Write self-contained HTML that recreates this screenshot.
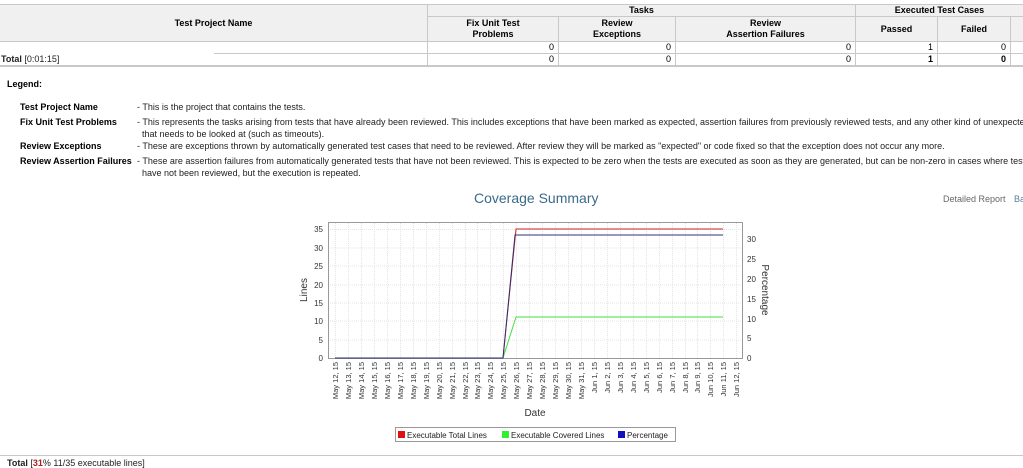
<!DOCTYPE html>
<html><head><meta charset="utf-8"><style>
body{margin:0;width:1023px;height:467px;overflow:hidden;background:#fff;font-family:"Liberation Sans",Arial,sans-serif;font-size:9px;color:#000;position:relative}
.a{position:absolute;white-space:nowrap}
.b{font-weight:bold}
.hd{position:absolute;background:#f0f0f0;font-weight:bold;text-align:center;font-size:9px;display:flex;align-items:center;justify-content:center;line-height:11px}
.ln{position:absolute;background:#c8c8c8}
.n{position:absolute;text-align:right;font-size:9px}
</style></head><body>
<div class="hd" style="left:0;top:5px;width:427px;height:36px">Test Project Name</div>
<div class="hd" style="left:428px;top:5px;width:427px;height:11px">Tasks</div>
<div class="hd" style="left:856px;top:5px;width:167px;height:11px">Executed Test Cases</div>
<div class="hd" style="left:428px;top:17px;width:130px;height:24px">Fix Unit Test<br>Problems</div>
<div class="hd" style="left:559px;top:17px;width:116px;height:24px">Review<br>Exceptions</div>
<div class="hd" style="left:676px;top:17px;width:179px;height:24px">Review<br>Assertion Failures</div>
<div class="hd" style="left:856px;top:17px;width:81px;height:24px">Passed</div>
<div class="hd" style="left:938px;top:17px;width:72px;height:24px">Failed</div>
<div class="hd" style="left:1011px;top:17px;width:12px;height:24px"></div>
<div class="ln" style="left:0;top:4px;width:1023px;height:1px"></div>
<div class="ln" style="left:428px;top:16px;width:595px;height:1px"></div>
<div class="ln" style="left:0;top:41px;width:1023px;height:1px"></div>
<div class="ln" style="left:214px;top:53px;width:809px;height:1px"></div>
<div class="ln" style="left:0;top:65px;width:1023px;height:2px"></div>
<div class="ln" style="left:427px;top:4px;width:1px;height:62px"></div>
<div class="ln" style="left:558px;top:16px;width:1px;height:50px"></div>
<div class="ln" style="left:675px;top:16px;width:1px;height:50px"></div>
<div class="ln" style="left:855px;top:4px;width:1px;height:62px"></div>
<div class="ln" style="left:937px;top:16px;width:1px;height:50px"></div>
<div class="ln" style="left:1010px;top:16px;width:1px;height:50px"></div>
<div class="a" style="left:1px;top:54px;color:#222"><b>Total</b> [0:01:15]</div>
<div class="n" style="left:500px;width:54px;top:42px">0</div>
<div class="n" style="left:600px;width:71px;top:42px">0</div>
<div class="n" style="left:780px;width:71px;top:42px">0</div>
<div class="n" style="left:860px;width:73px;top:42px">1</div>
<div class="n" style="left:940px;width:66px;top:42px">0</div>
<div class="n" style="left:500px;width:54px;top:54px">0</div>
<div class="n" style="left:600px;width:71px;top:54px">0</div>
<div class="n" style="left:780px;width:71px;top:54px">0</div>
<div class="n b" style="left:860px;width:73px;top:54px">1</div>
<div class="n b" style="left:940px;width:66px;top:54px">0</div>
<div class="a b" style="left:7px;top:79px">Legend:</div>
<div class="a b" style="left:20px;top:102px">Test Project Name</div>
<div class="a b" style="left:20px;top:117px">Fix Unit Test Problems</div>
<div class="a b" style="left:20px;top:141px">Review Exceptions</div>
<div class="a b" style="left:20px;top:156px">Review Assertion Failures</div>
<div class="a" style="left:137px;top:102px;color:#222">- This is the project that contains the tests.</div>
<div class="a" style="left:137px;top:117px;color:#222">- This represents the tasks arising from tests that have already been reviewed. This includes exceptions that have been marked as expected, assertion failures from previously reviewed tests, and any other kind of unexpected</div>
<div class="a" style="left:142px;top:129px;color:#222">that needs to be looked at (such as timeouts).</div>
<div class="a" style="left:137px;top:141px;color:#222">- These are exceptions thrown by automatically generated test cases that need to be reviewed. After review they will be marked as "expected" or code fixed so that the exception does not occur any more.</div>
<div class="a" style="left:137px;top:156px;color:#222">- These are assertion failures from automatically generated tests that have not been reviewed. This is expected to be zero when the tests are executed as soon as they are generated, but can be non-zero in cases where tests</div>
<div class="a" style="left:142px;top:168px;color:#222">have not been reviewed, but the execution is repeated.</div>
<div class="a" style="left:474px;top:190px;font-size:14px;color:#3a6a8a">Coverage Summary</div>
<div class="a" style="left:943px;top:194px;color:#666">Detailed Report <span style="color:#5a7fa0;margin-left:6px">Ba</span></div>
<svg class="a" style="left:0;top:0" width="1023" height="467" font-family="Liberation Sans, sans-serif">
<g stroke="#e4e4e4" stroke-dasharray="1,1" stroke-width="1">
<line x1="328" y1="229.5" x2="742" y2="229.5"/><line x1="328" y1="248" x2="742" y2="248"/><line x1="328" y1="266" x2="742" y2="266"/><line x1="328" y1="285" x2="742" y2="285"/><line x1="328" y1="303" x2="742" y2="303"/><line x1="328" y1="321" x2="742" y2="321"/><line x1="328" y1="340" x2="742" y2="340"/>
<line x1="335.5" y1="223" x2="335.5" y2="358"/><line x1="348.5" y1="223" x2="348.5" y2="358"/><line x1="361.5" y1="223" x2="361.5" y2="358"/><line x1="374.5" y1="223" x2="374.5" y2="358"/><line x1="387.5" y1="223" x2="387.5" y2="358"/><line x1="400.5" y1="223" x2="400.5" y2="358"/><line x1="413.5" y1="223" x2="413.5" y2="358"/><line x1="426.5" y1="223" x2="426.5" y2="358"/><line x1="439.5" y1="223" x2="439.5" y2="358"/><line x1="452.5" y1="223" x2="452.5" y2="358"/><line x1="465.5" y1="223" x2="465.5" y2="358"/><line x1="477.5" y1="223" x2="477.5" y2="358"/><line x1="490.5" y1="223" x2="490.5" y2="358"/><line x1="503.5" y1="223" x2="503.5" y2="358"/><line x1="516.5" y1="223" x2="516.5" y2="358"/><line x1="529.5" y1="223" x2="529.5" y2="358"/><line x1="542.5" y1="223" x2="542.5" y2="358"/><line x1="555.5" y1="223" x2="555.5" y2="358"/><line x1="568.5" y1="223" x2="568.5" y2="358"/><line x1="581.5" y1="223" x2="581.5" y2="358"/><line x1="594.5" y1="223" x2="594.5" y2="358"/><line x1="607.5" y1="223" x2="607.5" y2="358"/><line x1="620.5" y1="223" x2="620.5" y2="358"/><line x1="633.5" y1="223" x2="633.5" y2="358"/><line x1="646.5" y1="223" x2="646.5" y2="358"/><line x1="659.5" y1="223" x2="659.5" y2="358"/><line x1="672.5" y1="223" x2="672.5" y2="358"/><line x1="685.5" y1="223" x2="685.5" y2="358"/><line x1="697.5" y1="223" x2="697.5" y2="358"/><line x1="710.5" y1="223" x2="710.5" y2="358"/><line x1="723.5" y1="223" x2="723.5" y2="358"/><line x1="736.5" y1="223" x2="736.5" y2="358"/>
</g>
<rect x="328.5" y="222.5" width="414" height="136" fill="none" stroke="#999"/>
<g font-size="8" fill="#333" text-anchor="end">
<text x="323" y="232">35</text><text x="323" y="251">30</text><text x="323" y="269">25</text><text x="323" y="288">20</text><text x="323" y="306">15</text><text x="323" y="324">10</text><text x="323" y="343">5</text><text x="323" y="361">0</text>
</g>
<g font-size="8" fill="#333">
<text x="747" y="242">30</text><text x="747" y="262">25</text><text x="747" y="282">20</text><text x="747" y="302">15</text><text x="747" y="322">10</text><text x="747" y="341">5</text><text x="747" y="361">0</text>
</g>
<text transform="translate(307,290) rotate(-90)" font-size="10" fill="#333" text-anchor="middle">Lines</text>
<text transform="translate(762,290) rotate(90)" font-size="10" fill="#333" text-anchor="middle">Percentage</text>
<g font-size="7.5" fill="#333" text-anchor="end">
<text transform="translate(338,362) rotate(-90)">May 12, 15</text>
<text transform="translate(351,362) rotate(-90)">May 13, 15</text>
<text transform="translate(364,362) rotate(-90)">May 14, 15</text>
<text transform="translate(377,362) rotate(-90)">May 15, 15</text>
<text transform="translate(390,362) rotate(-90)">May 16, 15</text>
<text transform="translate(403,362) rotate(-90)">May 17, 15</text>
<text transform="translate(416,362) rotate(-90)">May 18, 15</text>
<text transform="translate(429,362) rotate(-90)">May 19, 15</text>
<text transform="translate(442,362) rotate(-90)">May 20, 15</text>
<text transform="translate(455,362) rotate(-90)">May 21, 15</text>
<text transform="translate(468,362) rotate(-90)">May 22, 15</text>
<text transform="translate(480,362) rotate(-90)">May 23, 15</text>
<text transform="translate(493,362) rotate(-90)">May 24, 15</text>
<text transform="translate(506,362) rotate(-90)">May 25, 15</text>
<text transform="translate(519,362) rotate(-90)">May 26, 15</text>
<text transform="translate(532,362) rotate(-90)">May 27, 15</text>
<text transform="translate(545,362) rotate(-90)">May 28, 15</text>
<text transform="translate(558,362) rotate(-90)">May 29, 15</text>
<text transform="translate(571,362) rotate(-90)">May 30, 15</text>
<text transform="translate(584,362) rotate(-90)">May 31, 15</text>
<text transform="translate(597,362) rotate(-90)">Jun 1, 15</text>
<text transform="translate(610,362) rotate(-90)">Jun 2, 15</text>
<text transform="translate(623,362) rotate(-90)">Jun 3, 15</text>
<text transform="translate(636,362) rotate(-90)">Jun 4, 15</text>
<text transform="translate(649,362) rotate(-90)">Jun 5, 15</text>
<text transform="translate(662,362) rotate(-90)">Jun 6, 15</text>
<text transform="translate(675,362) rotate(-90)">Jun 7, 15</text>
<text transform="translate(688,362) rotate(-90)">Jun 8, 15</text>
<text transform="translate(700,362) rotate(-90)">Jun 9, 15</text>
<text transform="translate(713,362) rotate(-90)">Jun 10, 15</text>
<text transform="translate(726,362) rotate(-90)">Jun 11, 15</text>
<text transform="translate(739,362) rotate(-90)">Jun 12, 15</text>
</g>
<text x="535" y="416" font-size="10" fill="#333" text-anchor="middle">Date</text>
<polyline points="335,358 503,358 516,229 723,229" fill="none" stroke="#d02020" stroke-width="1"/>
<polyline points="335,358 503,358 516,317 723,317" fill="none" stroke="#40e040" stroke-width="1"/>
<polyline points="335,358 503,358 515,235 723,235" fill="none" stroke="#303070" stroke-width="1"/>
<rect x="395.5" y="427.5" width="280" height="14" fill="#fff" stroke="#999"/>
<rect x="398" y="431" width="7" height="7" fill="#e01010"/>
<rect x="502" y="431" width="7" height="7" fill="#30f030"/>
<rect x="618" y="431" width="7" height="7" fill="#1010c0"/>
<g font-size="8" fill="#222"><text x="407" y="438">Executable Total Lines</text><text x="511" y="438">Executable Covered Lines</text><text x="627" y="438">Percentage</text></g>
<line x1="0" y1="455.5" x2="1023" y2="455.5" stroke="#c8c8c8"/>
</svg>
<div class="a" style="left:7px;top:458px;color:#222"><b>Total</b> [<b style="color:#b02020">31</b>% 11/35 executable lines]</div>
</body></html>
